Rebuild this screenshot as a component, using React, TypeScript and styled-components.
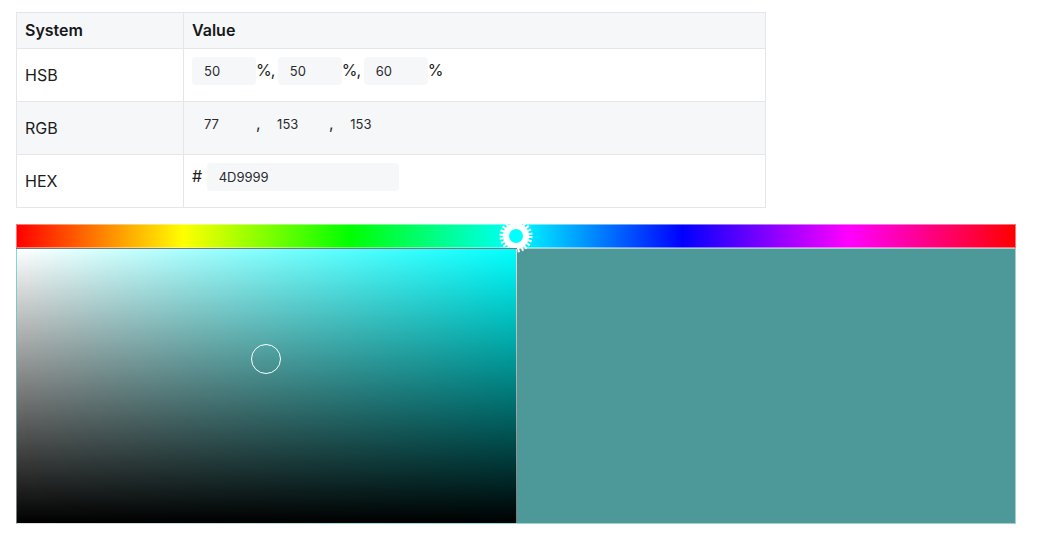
import * as React from "react";
import styled, { createGlobalStyle } from "styled-components";

const GlobalStyle = createGlobalStyle`
  html, body {
    margin: 0;
    padding: 0;
    background: #ffffff;
  }
  body {
    font-family: Inter, "Noto Sans", "Liberation Sans", sans-serif;
    color: #1c1d21;
  }
`;

const Page = styled.div`
  padding: 12px 16px;
  display: flex;
  flex-direction: column;
  gap: 16px;
`;

const Table = styled.table`
  width: 750px;
  border-collapse: collapse;
  font-size: 16px;
  line-height: 19px;

  th,
  td {
    border: 1px solid #e4e6ea;
    padding: 8px;
    text-align: left;
  }

  th {
    background: #f6f7f9;
    font-weight: 600;
    color: #16171a;
  }

  th:first-child,
  td:first-child {
    width: 150px;
  }

  tbody tr:nth-child(2) {
    background: #f6f7f9;
  }
`;

const Label = styled.td`
  vertical-align: middle;
`;

const ValueCell = styled.td`
  vertical-align: top;
`;

const ValueLine = styled.div`
  display: flex;
  align-items: center;
  height: 28px;
  margin-bottom: 8px;
  white-space: pre;
`;

const Field = styled.input<{ $wide?: boolean }>`
  box-sizing: border-box;
  width: ${(p) => (p.$wide ? "192px" : "64px")};
  height: 28px;
  padding: 0 12px;
  border: none;
  border-radius: 4px;
  background: #f6f7f9;
  font-family: Inter, "Liberation Sans", sans-serif;
  font-size: 13px;
  color: #2a2b30;
  outline: none;
`;

const Sep = styled.span<{ $tight?: boolean }>`
  font-size: 16px;
  margin-top: -2px;
  letter-spacing: ${(p) => (p.$tight ? "-1px" : "0")};
`;

const Picker = styled.div`
  width: 1000px;
  display: flex;
  flex-direction: column;
`;

const HueBar = styled.div`
  position: relative;
  box-sizing: border-box;
  height: 24px;
  border: 1px solid rgba(255, 255, 255, 0.45);
  background: linear-gradient(
    to right,
    #ff0000 0%,
    #ffff00 16.67%,
    #00ff00 33.33%,
    #00ffff 50%,
    #0000ff 66.67%,
    #ff00ff 83.33%,
    #ff0000 100%
  );
`;

const HueKnob = styled.div<{ $hue: number }>`
  position: absolute;
  top: 50%;
  left: ${(p) => (p.$hue / 360) * 100}%;
  width: 36px;
  height: 36px;
  transform: translate(-50%, -50%);
  svg {
    display: block;
  }
`;

const Panels = styled.div`
  display: flex;
  height: 276px;
`;

const SatArea = styled.div<{ $hue: number }>`
  position: relative;
  flex: 1;
  box-sizing: border-box;
  border: 1px solid rgba(200, 200, 200, 0.6);
  background: linear-gradient(to top, #000, rgba(0, 0, 0, 0)),
    linear-gradient(to right, #fff, rgba(255, 255, 255, 0)),
    hsl(${(p) => p.$hue}, 100%, 50%);
`;

const SatCursor = styled.div`
  position: absolute;
  width: 30px;
  height: 30px;
  box-sizing: border-box;
  border: 1px solid #ffffff;
  border-radius: 50%;
  transform: translate(-50%, -50%);
`;

const Preview = styled.div<{ $color: string }>`
  flex: 1;
  box-sizing: border-box;
  border: 1px solid rgba(255, 255, 255, 0.5);
  border-left: none;
  background: ${(p) => p.$color};
`;

function KnobIcon() {
  return (
    <svg width="36" height="36" viewBox="0 0 36 36">
      <circle cx="18" cy="18" r="7" fill="#00ffff" />
      <circle cx="18" cy="18" r="10" fill="none" stroke="#ffffff" strokeWidth="6" />
      <circle
        cx="18"
        cy="18"
        r="14.5"
        fill="none"
        stroke="#ffffff"
        strokeWidth="4"
        strokeDasharray="2 1.8"
      />
    </svg>
  );
}

export default function App() {
  const hsb = { h: 180, s: 50, b: 60 };
  const rgb = [77, 153, 153];
  const hex = "4D9999";

  return (
    <Page>
      <GlobalStyle />
      <Table>
        <thead>
          <tr>
            <th>System</th>
            <th>Value</th>
          </tr>
        </thead>
        <tbody>
          <tr>
            <Label>HSB</Label>
            <ValueCell>
              <ValueLine>
                <Field defaultValue={String(hsb.s)} />
                <Sep $tight>%, </Sep>
                <Field defaultValue={String(hsb.s)} />
                <Sep $tight>%, </Sep>
                <Field defaultValue={String(hsb.b)} />
                <Sep>%</Sep>
              </ValueLine>
            </ValueCell>
          </tr>
          <tr>
            <Label>RGB</Label>
            <ValueCell>
              <ValueLine>
                <Field defaultValue={String(rgb[0])} />
                <Sep>, </Sep>
                <Field defaultValue={String(rgb[1])} />
                <Sep>, </Sep>
                <Field defaultValue={String(rgb[2])} />
              </ValueLine>
            </ValueCell>
          </tr>
          <tr>
            <Label>HEX</Label>
            <ValueCell>
              <ValueLine>
                <Sep># </Sep>
                <Field $wide defaultValue={hex} />
              </ValueLine>
            </ValueCell>
          </tr>
        </tbody>
      </Table>

      <Picker>
        <HueBar>
          <HueKnob $hue={hsb.h}>
            <KnobIcon />
          </HueKnob>
        </HueBar>
        <Panels>
          <SatArea $hue={hsb.h}>
            <SatCursor style={{ left: `${hsb.s}%`, top: `${100 - hsb.b}%` }} />
          </SatArea>
          <Preview $color={`#${hex}`} />
        </Panels>
      </Picker>
    </Page>
  );
}
